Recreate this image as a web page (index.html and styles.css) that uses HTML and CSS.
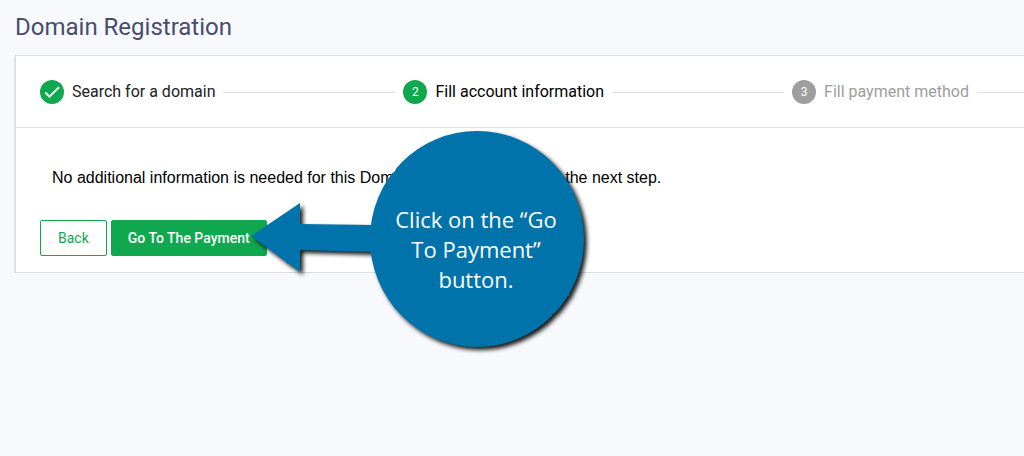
FILE: index.html
```html
<!DOCTYPE html>
<html lang="en">
<head>
    <meta charset="UTF-8">
    <meta name="viewport" content="width=device-width, initial-scale=1.0">
    <title>Domain Registration</title>
    <link rel="stylesheet" href="styles.css">
</head>
<body>
    <main class="page">
        <h1 class="page-title">Domain Registration</h1>

        <section class="card">
            <ol class="stepper">
                <li class="step">
                    <span class="step-icon">
                        <svg width="20" height="20" viewBox="0 0 24 24" aria-hidden="true"><path fill="#fff" stroke="#fff" stroke-width=".5" d="M9 16.17L4.83 12l-1.42 1.41L9 19 21 7l-1.41-1.41z"/></svg>
                    </span>
                    <span class="step-label">Search for a domain</span>
                </li>
                <li class="step active">
                    <span class="step-icon">2</span>
                    <span class="step-label">Fill account information</span>
                </li>
                <li class="step disabled">
                    <span class="step-icon">3</span>
                    <span class="step-label">Fill payment method</span>
                </li>
            </ol>

            <div class="card-body">
                <p class="message">No additional information is needed for this Domain. You can proceed to the next step.</p>
                <div class="actions">
                    <button type="button" class="btn">Back</button>
                    <button type="button" class="btn btn-primary">Go To The Payment</button>
                </div>
            </div>
        </section>
    </main>

    <div class="callout">
        <svg class="callout-shape" width="350" height="230" viewBox="0 0 350 230" aria-hidden="true">
            <defs>
                <filter id="rough" x="-5%" y="-5%" width="110%" height="110%">
                    <feTurbulence type="fractalNoise" baseFrequency="0.12" numOctaves="1" seed="4" result="noise"/>
                    <feDisplacementMap in="SourceGraphic" in2="noise" scale="2" xChannelSelector="R" yChannelSelector="G"/>
                </filter>
            </defs>
            <g fill="#0073aa" filter="url(#rough)">
                <ellipse cx="228" cy="114" rx="107" ry="108"/>
                <path d="M2 111L51 78V99L125 100V127L51 125V147Z"/>
            </g>
        </svg>
        <p class="callout-text">Click on the “Go To Payment” button.</p>
    </div>
</body>
</html>
```
FILE: styles.css
```css
body {
    margin: 0;
    background-color: #f8f9fd;
    font-family: Roboto, sans-serif;
    color: #000;
}
.page {
    padding: 12px 0 0 15px;
}
.page-title {
    margin: 0 0 13px;
    font-size: 24px;
    line-height: 30px;
    font-weight: 400;
    color: #474d6d;
}
.card {
    background-color: #fff;
    border: 1px solid #dcdee3;
    border-right: 0;
    box-shadow: 0 1px 0 #a9aaae, 0 2px 2px rgba(0,0,0,0.25);
}

/* stepper */
.stepper {
    display: flex;
    margin: 0;
    padding: 24px 0 23px 24px;
    list-style: none;
    border-bottom: 1px solid #e0e0e0;
}
.step {
    display: flex;
    align-items: center;
    gap: 8px;
    margin-right: 8px;
}
.step::after {
    content: "";
    width: 172px;
    border-top: 1px solid #e0e0e0;
}
.step:last-child {
    flex: 1;
    margin-right: 0;
}
.step:last-child::after {
    flex: 1;
    width: auto;
}
.step-icon {
    display: flex;
    align-items: center;
    justify-content: center;
    width: 24px;
    height: 24px;
    border-radius: 50%;
    background-color: #10a84f;
    color: #fff;
    font-size: 12px;
}
.step-label {
    font-size: 16px;
    line-height: 24px;
    white-space: nowrap;
    color: #212121;
}
.active .step-label {
    color: #000;
}
.disabled .step-icon {
    background-color: #9e9e9e;
}
.disabled .step-label {
    color: #9e9e9e;
}

/* content */
.card-body {
    padding: 37px 24px 16px;
}
.message {
    margin: 0 12px 29px;
    font-family: "Liberation Sans", Arial, sans-serif;
    font-size: 16px;
    line-height: 26px;
}
.actions {
    display: flex;
    gap: 4px;
}
.btn {
    height: 36px;
    padding: 0 17px;
    border: 1px solid #10a84f;
    border-radius: 2px;
    background-color: #fff;
    color: #10a84f;
    font-family: Roboto, sans-serif;
    font-size: 14px;
    font-weight: 400;
    cursor: pointer;
}
.btn-primary {
    padding: 0 16px;
    background-color: #10a84f;
    color: #fff;
    font-weight: 500;
}

/* callout over the page */
.callout {
    position: absolute;
    top: 125px;
    left: 249px;
    width: 350px;
}
.callout-shape {
    display: block;
    filter: drop-shadow(3px 3px 2px rgba(0,0,0,0.9));
}
.callout-text {
    position: absolute;
    top: 79px;
    left: 137px;
    width: 180px;
    margin: 0;
    color: #fff;
    font-family: "Open Sans", sans-serif;
    font-size: 22px;
    line-height: 30px;
    text-align: center;
}
```
